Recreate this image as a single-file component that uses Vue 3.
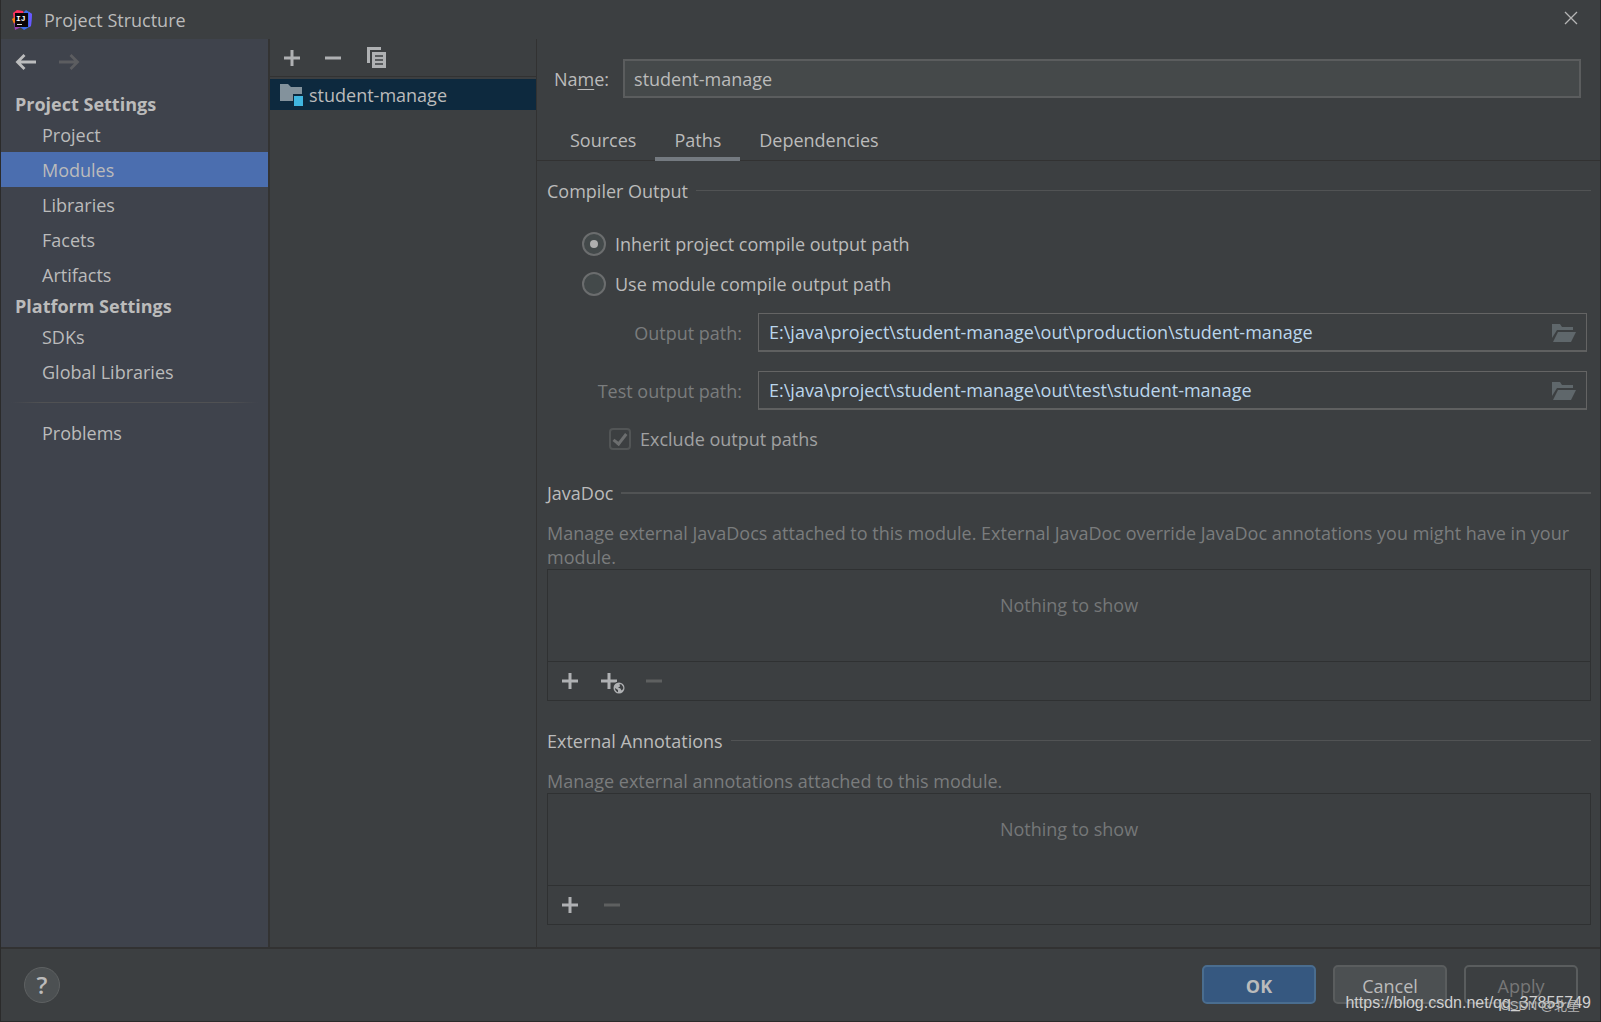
<script setup>
import { ref } from 'vue'

const navGroups = [
  { title: 'Project Settings', items: ['Project', 'Modules', 'Libraries', 'Facets', 'Artifacts'] },
  { title: 'Platform Settings', items: ['SDKs', 'Global Libraries'] },
]
const activeNav = ref('Modules')

const tabs = ['Sources', 'Paths', 'Dependencies']
const activeTab = ref('Paths')

const moduleName = ref('student-manage')
const outputMode = ref('inherit')
const outputFields = ref([
  { id: 'output-path', label: 'Output path:', value: 'E:\\java\\project\\student-manage\\out\\production\\student-manage' },
  { id: 'test-output-path', label: 'Test output path:', value: 'E:\\java\\project\\student-manage\\out\\test\\student-manage' },
])
const excludeOutput = ref(true)
</script>

<template>
  <div class="window">
    <header class="titlebar">
      <svg class="logo" viewBox="0 0 20 20" aria-hidden="true">
        <path d="M1 3 L5 0 L11 1 L13 6 L6 15 L2 12 Z" fill="#fe315d" />
        <path d="M0 9 L3 7 L5 12 L2 14 Z" fill="#f97a12" />
        <path d="M2 13 L6 12 L12 16 L7 18 L3 20 Z" fill="#9a3fb5" />
        <path d="M12 2 L14 0 L20 4 L19 16 L12 20 L8 17 Z" fill="#3b6bea" />
        <path d="M17 2 L20 4 L19 16 L17 17 Z" fill="#6b57ff" />
        <rect x="3" y="3" width="13" height="14" fill="#0a0508" />
        <text x="4" y="11" class="logo-text">IJ</text>
        <rect x="5" y="14" width="5" height="1" fill="#ddd" />
      </svg>
      <h1>Project Structure</h1>
      <button class="icon-btn close" aria-label="Close">
        <svg width="12" height="12" viewBox="0 0 12 12"><path d="M0 0 L12 12 M12 0 L0 12" stroke="#b5b5b5" stroke-width="1.3" /></svg>
      </button>
    </header>

    <div class="body">
      <nav class="sidebar">
        <div class="history">
          <button class="icon-btn" aria-label="Back">
            <svg width="20" height="16" viewBox="0 0 20 16" fill="none" stroke="#bcbdbe" stroke-width="2.8"><path d="M1.5 8 H20 M8.5 1 L1.5 8 L8.5 15" /></svg>
          </button>
          <button class="icon-btn" aria-label="Forward" disabled>
            <svg width="20" height="16" viewBox="0 0 20 16" fill="none" stroke="#5c5d60" stroke-width="2.8"><path d="M18.5 8 H0 M11.5 1 L18.5 8 L11.5 15" /></svg>
          </button>
        </div>
        <template v-for="group in navGroups" :key="group.title">
          <h2>{{ group.title }}</h2>
          <button
            v-for="item in group.items"
            :key="item"
            class="nav-item"
            :class="{ active: item === activeNav }"
            @click="activeNav = item"
          >{{ item }}</button>
        </template>
        <div class="nav-divider"></div>
        <button class="nav-item" :class="{ active: activeNav === 'Problems' }" @click="activeNav = 'Problems'">Problems</button>
      </nav>

      <section class="modules">
        <div class="modules-toolbar">
          <button class="icon-btn" aria-label="Add module">
            <svg width="24" height="24" viewBox="0 0 24 24"><path d="M4 12 H20 M12 4 V20" stroke="#afb1b3" stroke-width="3" /></svg>
          </button>
          <button class="icon-btn" aria-label="Remove module">
            <svg width="24" height="24" viewBox="0 0 24 24"><path d="M3 12 H19" stroke="#afb1b3" stroke-width="3" /></svg>
          </button>
          <button class="icon-btn" aria-label="Copy module">
            <svg width="24" height="24" viewBox="0 0 24 24">
              <path d="M3 1 H17 V4 H6 V17 H3 Z" fill="#afb1b3" />
              <rect x="8" y="6" width="14" height="16" fill="#afb1b3" />
              <path d="M11 10 H19 M11 14 H19 M11 18 H19" stroke="#3c3f41" stroke-width="1.6" />
            </svg>
          </button>
        </div>
        <button class="module-row">
          <svg width="24" height="23" viewBox="0 0 24 23" aria-hidden="true">
            <path d="M0 1 H8 L11 4 H22 V11 H13 V18 H0 Z" fill="#83929c" />
            <rect x="14" y="13" width="9" height="10" fill="#40b6e0" />
          </svg>
          <span>student-manage</span>
        </button>
      </section>

      <main class="editor">
        <div class="name-row">
          <label for="module-name">Na<u>m</u>e:</label>
          <input id="module-name" v-model="moduleName" type="text" />
        </div>

        <div class="tabs" role="tablist">
          <button
            v-for="tab in tabs"
            :key="tab"
            role="tab"
            :aria-selected="tab === activeTab"
            :class="{ active: tab === activeTab }"
            @click="activeTab = tab"
          >{{ tab }}</button>
        </div>

        <div class="content">
          <section>
            <h3>Compiler Output</h3>
            <div class="radios">
              <label><input v-model="outputMode" type="radio" name="output" value="inherit" />Inherit project compile output path</label>
              <label><input v-model="outputMode" type="radio" name="output" value="module" />Use module compile output path</label>
            </div>
            <div class="paths">
              <div v-for="field in outputFields" :key="field.id" class="path-row">
                <label :for="field.id">{{ field.label }}</label>
                <div class="path-field">
                  <input :id="field.id" v-model="field.value" type="text" readonly />
                  <button class="icon-btn" aria-label="Browse" disabled>
                    <svg width="24" height="18" viewBox="0 0 24 18" fill="#5f676b">
                      <path d="M0 0 H8 L10 3 H21 V6 H5 L0 14 Z" />
                      <path d="M6 8 H24 L19 18 H1 Z" />
                    </svg>
                  </button>
                </div>
              </div>
            </div>
            <label class="exclude"><input v-model="excludeOutput" type="checkbox" disabled />Exclude output paths</label>
          </section>

          <section>
            <h3 class="strong">JavaDoc</h3>
            <p>Manage external JavaDocs attached to this module. External JavaDoc override JavaDoc annotations you might have in your module.</p>
            <div class="list-box">
              <div class="empty">Nothing to show</div>
              <div class="list-toolbar">
                <button class="icon-btn" aria-label="Add JavaDoc">
                  <svg width="24" height="24" viewBox="0 0 24 24"><path d="M4 12 H20 M12 4 V20" stroke="#afb1b3" stroke-width="3" /></svg>
                </button>
                <button class="icon-btn" aria-label="Add JavaDoc URL">
                  <svg width="24" height="24" viewBox="0 0 24 24">
                    <path d="M1 12 H17 M9 4 V20" stroke="#afb1b3" stroke-width="3" />
                    <circle cx="19" cy="19" r="6.5" fill="#3c3f41" />
                    <circle cx="19" cy="19" r="5.5" fill="#afb1b3" />
                    <path d="M15 19 L18 21 L18 23.3 Q15 22 15 19 Z M19.5 15 L21.5 15.5 Q23.6 17.5 23.2 20 L21.5 21.5 L20.5 19.5 L18 18.5 L20 17.5 Z" fill="#3c3f41" />
                  </svg>
                </button>
                <button class="icon-btn" aria-label="Remove JavaDoc" disabled>
                  <svg width="24" height="24" viewBox="0 0 24 24"><path d="M4 12 H20" stroke="#5e6060" stroke-width="3" /></svg>
                </button>
              </div>
            </div>
          </section>

          <section>
            <h3>External Annotations</h3>
            <p>Manage external annotations attached to this module.</p>
            <div class="list-box">
              <div class="empty">Nothing to show</div>
              <div class="list-toolbar">
                <button class="icon-btn" aria-label="Add annotations">
                  <svg width="24" height="24" viewBox="0 0 24 24"><path d="M4 12 H20 M12 4 V20" stroke="#afb1b3" stroke-width="3" /></svg>
                </button>
                <button class="icon-btn" aria-label="Remove annotations" disabled>
                  <svg width="24" height="24" viewBox="0 0 24 24"><path d="M4 12 H20" stroke="#5e6060" stroke-width="3" /></svg>
                </button>
              </div>
            </div>
          </section>
        </div>
      </main>
    </div>

    <footer class="footer">
      <button class="help" aria-label="Help">?</button>
      <button class="btn primary">OK</button>
      <button class="btn">Cancel</button>
      <button class="btn" disabled>Apply</button>
    </footer>

    <div class="watermark url">https://blog.csdn.net/qq_37855749</div>
    <div class="watermark author">CSDN @北星</div>
  </div>
</template>

<style>
body {
  margin: 0;
  background: #3c3f41;
}
</style>

<style scoped>
.window {
  position: relative;
  box-sizing: border-box;
  min-height: 100vh;
  display: flex;
  flex-direction: column;
  border: solid #2b2b2b;
  border-width: 0 1px 1px;
  background: #3c3f41;
  color: #bbbbbb;
  font: 18px/24px "Open Sans", "Noto Sans", "Noto Sans CJK SC", sans-serif;
}

button,
input {
  box-sizing: border-box;
  margin: 0;
  padding: 0;
  border: 0;
  background: none;
  color: inherit;
  font: inherit;
}

h1,
h2,
h3,
p {
  margin: 0;
  font-size: 18px;
  font-weight: 400;
}

.icon-btn {
  display: flex;
  align-items: center;
  justify-content: center;
}

.icon-btn svg {
  display: block;
  overflow: visible;
}

.titlebar {
  display: flex;
  align-items: center;
  height: 39px;
  padding: 0 23px 0 11px;
}

.logo {
  width: 20px;
  height: 20px;
  margin-right: 12px;
}

.logo-text {
  fill: #ffffff;
  font: bold 8px "Liberation Mono", monospace;
}

.close {
  width: 12px;
  height: 36px;
  margin: 0 0 3px auto;
}

.body {
  flex: 1;
  display: flex;
}

.sidebar {
  box-sizing: border-box;
  flex: none;
  width: 269px;
  border-right: 2px solid #333333;
  background: #3f434c;
}

.history {
  display: flex;
  align-items: center;
  gap: 23px;
  height: 45px;
  margin-bottom: 6px;
  padding: 0 15px;
}

.sidebar h2 {
  padding: 2px 14px 0;
  font-weight: 700;
  line-height: 25px;
}

.nav-item {
  display: block;
  width: 100%;
  height: 35px;
  padding-left: 41px;
  text-align: left;
}

.nav-item.active {
  background: #4b6eaf;
}

.nav-divider {
  height: 1px;
  margin: 13px 10px 12px;
  background: linear-gradient(90deg, transparent, #505153 12%, #505153 88%, transparent);
}

.modules {
  box-sizing: border-box;
  flex: none;
  width: 267px;
  border-right: 1px solid #323232;
}

.modules-toolbar {
  box-sizing: border-box;
  display: flex;
  align-items: center;
  gap: 18px;
  height: 38px;
  padding-left: 10px;
  border-bottom: 1px solid #323232;
}

.module-row {
  display: flex;
  align-items: center;
  gap: 5px;
  width: 100%;
  height: 31px;
  margin-top: 2px;
  padding-left: 10px;
  background: #0d293e;
}

.editor {
  flex: 1;
  min-width: 0;
}

.name-row {
  display: flex;
  align-items: center;
  gap: 14px;
  padding: 20px 19px 0 17px;
}

.name-row u {
  text-underline-offset: 3px;
}

.name-row input {
  flex: 1;
  height: 39px;
  padding: 0 9px;
  border: 2px solid #5b5d5e;
  background: #45494a;
}

.tabs {
  display: flex;
  height: 42px;
  margin-top: 20px;
  padding-left: 14px;
  border-bottom: 1px solid #323232;
}

.tabs button {
  height: 43px;
  padding: 0 19px;
  border: solid transparent;
  border-width: 4px 0;
}

.tabs button.active {
  border-bottom-color: #747a80;
}

.content {
  padding: 18px 9px 20px 10px;
}

h3 {
  display: flex;
  align-items: center;
  gap: 8px;
}

h3::after {
  content: "";
  flex: 1;
  height: 1px;
  margin-bottom: 2px;
  background: #515354;
}

h3.strong::after {
  height: 2px;
  margin-bottom: 0;
}

.radios {
  display: flex;
  flex-direction: column;
  align-items: flex-start;
  gap: 16px;
  margin: 29px 0 17px 35px;
}

.radios label,
.exclude {
  display: flex;
  align-items: center;
  gap: 9px;
}

.radios input,
.exclude input {
  flex: none;
  display: grid;
  place-items: center;
  width: 24px;
  height: 24px;
  appearance: none;
  border: 2px solid #6b6d6e;
  border-radius: 50%;
  background: #43494a;
}

.radios input:checked::before {
  content: "";
  width: 8px;
  height: 8px;
  border-radius: 50%;
  background: #afafaf;
}

.paths {
  display: flex;
  flex-direction: column;
  gap: 19px;
  padding-right: 4px;
}

.path-row {
  display: flex;
  align-items: center;
  gap: 16px;
}

.path-row label {
  width: 195px;
  color: #7a7c7d;
  text-align: right;
}

.path-field {
  flex: 1;
  box-sizing: border-box;
  display: flex;
  height: 39px;
  padding: 0 10px;
  border: 1px solid #646464;
  border-bottom: 2px solid #5f6060;
}

.path-field input {
  flex: 1;
  min-width: 0;
  color: #bbd6ec;
}

.path-field .icon-btn {
  padding-top: 2px;
}

.exclude {
  margin: 17px 0 30px 62px;
  color: #a0a1a2;
}

.exclude input {
  width: 22px;
  height: 22px;
  border: 2px solid #525556;
  border-radius: 4px;
  background: none;
}

.exclude input:checked::before {
  content: "";
  width: 5px;
  height: 11px;
  border: solid #6c6e6f;
  border-width: 0 3px 3px 0;
  transform: translateY(-1px) rotate(38deg);
}

p {
  margin-top: 16px;
  color: #7a7c7d;
}

.list-box {
  margin-bottom: 28px;
  border: 1px solid #2f3132;
}

section:last-child .list-box {
  margin-bottom: 0;
}

.empty {
  height: 68px;
  padding-top: 23px;
  color: #757778;
  text-align: center;
}

.list-toolbar {
  display: flex;
  align-items: center;
  gap: 18px;
  height: 38px;
  padding-left: 10px;
  border-top: 1px solid #2f3132;
}

.footer {
  display: flex;
  align-items: center;
  gap: 17px;
  padding: 16px 22px 17px 23px;
  border-top: 2px solid #323232;
}

.help {
  width: 36px;
  height: 36px;
  margin-right: auto;
  border: 1px solid #5e6162;
  border-radius: 50%;
  background: #4c5052;
  font-size: 24px;
  font-weight: 600;
}

.btn {
  width: 114px;
  height: 39px;
  padding-top: 2px;
  border: 2px solid #5a5d5e;
  border-radius: 5px;
  background: #4c5052;
}

.btn.primary {
  border-color: #4a6d8f;
  background: #365880;
  font-weight: 700;
}

.btn:disabled {
  background: none;
  color: #777777;
}

.watermark {
  position: absolute;
  pointer-events: none;
  font-family: "Liberation Sans", "Noto Sans CJK SC", sans-serif;
  white-space: nowrap;
}

.url {
  right: 9px;
  bottom: 6px;
  color: #d0d0d0;
  font-size: 16px;
}

.author {
  right: 20px;
  bottom: 3px;
  color: #b4b4b4;
  font-size: 13px;
}
</style>
